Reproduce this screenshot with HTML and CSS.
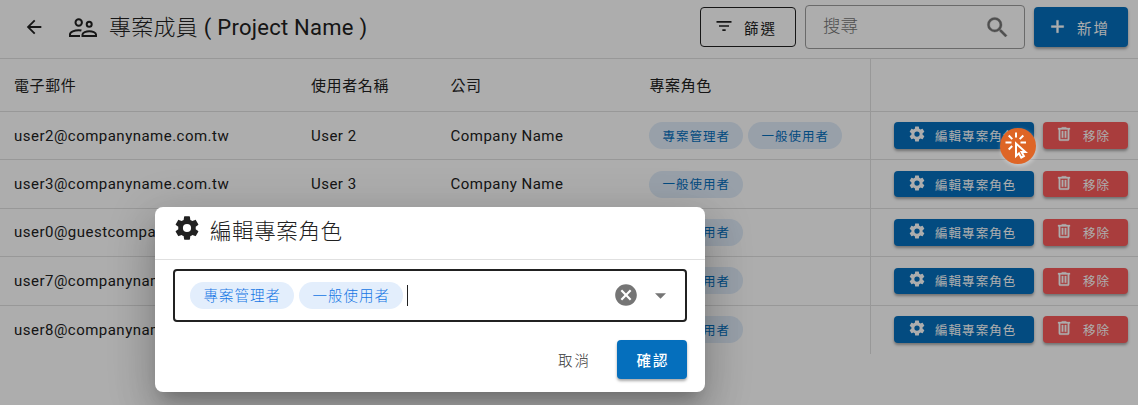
FILE: index.html
```html
<!DOCTYPE html>
<html lang="zh-Hant">
<head>
<meta charset="utf-8">
<title>專案成員</title>
<link rel="stylesheet" href="styles.css">
</head>
<body>
<svg width="0" height="0" class="defs">
  <symbol id="cog" viewBox="0 0 24 24"><path d="M12 15.5A3.5 3.5 0 0 1 8.5 12 3.5 3.5 0 0 1 12 8.500a3.500 3.500 0 0 1 3.500 3.500 3.500 3.500 0 0 1-3.500 3.500m7.430-2.530c.04-.32.07-.64.07-.97s-.03-.66-.07-1l2.110-1.630c.19-.15.24-.42.12-.64l-2-3.460c-.12-.22-.39-.31-.61-.22l-2.490 1c-.52-.39-1.060-.73-1.690-.98l-.37-2.650A.506.506 0 0 0 14 2h-4c-.25 0-.46.18-.5.42l-.37 2.650c-.63.25-1.170.59-1.690.98l-2.490-1c-.22-.09-.49 0-.61.22l-2 3.460c-.13.22-.07.49.12.64L4.570 11c-.04.34-.07.67-.07 1s.03.65.07.97l-2.110 1.660c-.19.15-.25.42-.12.64l2 3.460c.12.22.39.3.61.22l2.490-1.010c.52.4 1.060.74 1.690.99l.37 2.650c.04.24.25.42.5.42h4c.25 0 .46-.18.5-.42l.37-2.650c.63-.26 1.170-.59 1.690-.99l2.490 1.010c.22.08.49 0 .61-.22l2-3.460c.12-.22.07-.49-.12-.64z"/></symbol>
  <symbol id="trash" viewBox="0 0 24 24"><path d="M9 3v1H4v2h1v13a2 2 0 0 0 2 2h10a2 2 0 0 0 2-2V6h1V4h-5V3zM7 6h10v13H7zm2 2v9h2V8zm4 0v9h2V8z"/></symbol>
</svg>
<div class="page">
  <header class="topbar">
    <svg class="back" viewBox="0 0 24 24"><path d="M20 11v2H8l5.500 5.500-1.420 1.420L4.160 12l7.920-7.920L13.500 5.500 8 11z"/></svg>
    <svg class="people" viewBox="0 0 28 20"><circle cx="9.700" cy="4.500" r="3.200"/><circle cx="20.200" cy="6.300" r="2.500"/><path d="M11 17.900H1v-1.700c0-2.400 4.600-4 8.700-4 1 0 2 .1 2.700.3M13.500 17.900H27v-1.500c0-1.900-3.500-3.100-6.700-3.100s-6.800 1.200-6.800 3.100z"/></svg>
    <h1 class="title"><span class="light">專案成員</span> ( Project Name )</h1>
    <button class="btn filter"><svg viewBox="0 0 24 24"><path d="M6 13h12v-2H6M3 6v2h18V6M10 18h4v-2h-4z"/></svg><span>篩選</span></button>
    <div class="search"><span>搜尋</span><svg viewBox="0 0 24 24"><path d="M9.500 3A6.500 6.500 0 0 1 16 9.500c0 1.610-.59 3.090-1.560 4.230l.27.27h.79l5 5-1.500 1.500-5-5v-.79l-.27-.27A6.516 6.516 0 0 1 9.500 16 6.500 6.500 0 0 1 3 9.500 6.500 6.500 0 0 1 9.500 3m0 2C7 5 5 7 5 9.500S7 14 9.500 14 14 12 14 9.500 12 5 9.500 5"/></svg></div>
    <button class="btn add"><svg viewBox="0 0 24 24"><path d="M19 13h-6v6h-2v-6H5v-2h6V5h2v6h6z"/></svg><span>新增</span></button>
  </header>
  <main class="table">
    <div class="row head"><div class="cell">電子郵件</div><div class="cell">使用者名稱</div><div class="cell">公司</div><div class="cell">專案角色</div><div class="actions"></div></div>
    <div class="row"><div class="cell">user2@companyname.com.tw</div><div class="cell">User 2</div><div class="cell">Company Name</div><div class="cell chips"><span class="chip">專案管理者</span><span class="chip">一般使用者</span></div><div class="actions"><button class="btn edit"><svg><use href="#cog"/></svg><span>編輯專案角色</span></button><button class="btn remove"><svg><use href="#trash"/></svg><span>移除</span></button></div></div>
    <div class="row"><div class="cell">user3@companyname.com.tw</div><div class="cell">User 3</div><div class="cell">Company Name</div><div class="cell chips"><span class="chip">一般使用者</span></div><div class="actions"><button class="btn edit"><svg><use href="#cog"/></svg><span>編輯專案角色</span></button><button class="btn remove"><svg><use href="#trash"/></svg><span>移除</span></button></div></div>
    <div class="row"><div class="cell">user0@guestcompany</div><div class="cell"></div><div class="cell"></div><div class="cell chips"><span class="chip">一般使用者</span></div><div class="actions"><button class="btn edit"><svg><use href="#cog"/></svg><span>編輯專案角色</span></button><button class="btn remove"><svg><use href="#trash"/></svg><span>移除</span></button></div></div>
    <div class="row"><div class="cell">user7@companyname</div><div class="cell"></div><div class="cell"></div><div class="cell chips"><span class="chip">一般使用者</span></div><div class="actions"><button class="btn edit"><svg><use href="#cog"/></svg><span>編輯專案角色</span></button><button class="btn remove"><svg><use href="#trash"/></svg><span>移除</span></button></div></div>
    <div class="row"><div class="cell">user8@companyname</div><div class="cell"></div><div class="cell"></div><div class="cell chips"><span class="chip">一般使用者</span></div><div class="actions"><button class="btn edit"><svg><use href="#cog"/></svg><span>編輯專案角色</span></button><button class="btn remove"><svg><use href="#trash"/></svg><span>移除</span></button></div></div>
  </main>
</div>
<div class="scrim"></div>
<section class="dialog">
  <div class="dialog-head"><svg><use href="#cog"/></svg><h2>編輯專案角色</h2></div>
  <div class="field"><span class="chip big">專案管理者</span><span class="chip big">一般使用者</span><i class="caret"></i>
    <svg class="clear" viewBox="0 0 24 24"><path d="M12 2C6.470 2 2 6.470 2 12s4.470 10 10 10 10-4.470 10-10S17.530 2 12 2m5 13.590L15.590 17 12 13.410 8.410 17 7 15.590 10.590 12 7 8.410 8.410 7 12 10.590 15.590 7 17 8.410 13.410 12z"/></svg>
    <svg class="arrow" viewBox="0 0 10 5"><path d="M0 0h10L5 5z"/></svg>
  </div>
  <div class="dialog-foot"><button class="btn cancel">取消</button><button class="btn ok">確認</button></div>
</section>
<div class="pointer"><svg viewBox="0 0 36 36"><path d="M16 4.500v5M8.700 7.500l3.600 3.600M5.500 14.500h6M8.700 21.500l3.500-3.500M23.300 7.500l-3.600 3.600M20.500 14.500h5.500"/><path class="hand" d="M16 15.500v12.500l3-2.700 2.300 4.300 2.600-1.400-2.300-4.100h3.800z"/></svg></div>
</body>
</html>
```
FILE: styles.css
```css
* { box-sizing: border-box; }
body { margin: 0; width: 1138px; height: 405px; overflow: hidden; position: relative; background: #fff; color: #212121; font-family: Roboto, "Noto Sans CJK TC", sans-serif; }
svg { fill: currentColor; flex: none; }
.defs { position: absolute; }
.topbar { height: 59px; border-bottom: 1px solid #e0e0e0; display: flex; align-items: flex-start; padding: 0 10px 0 23px; }
.back { width: 22px; height: 22px; margin-top: 16px; }
.people { width: 28px; height: 20px; margin: 18px 0 0 24px; fill: none; stroke: currentColor; stroke-width: 2; }
.title { margin: 12px auto 0 12px; font-size: 22px; line-height: 32px; font-weight: 400; letter-spacing: .26px; white-space: pre; }
.light { font-weight: 300; }
.btn { display: flex; align-items: center; border: 0; border-radius: 4px; padding: 0; font: 500 14.500px Roboto, "Noto Sans CJK TC", sans-serif; letter-spacing: 2px; color: #fff; background: #056fbd; box-shadow: 0 2px 3px rgba(0,0,0,.35); white-space: nowrap; }
.filter { width: 96px; height: 40px; margin-top: 7px; padding-left: 13px; background: none; color: #212121; border: 1px solid #212121; box-shadow: none; font-weight: 400; }
.filter svg { width: 20px; height: 20px; margin-top: -2px; }
.filter span { margin: 0 0 0 10px; }
.search { width: 220px; height: 44px; margin: 5px 9px 0; border: 1px solid #9c9c9c; border-radius: 4px; display: flex; align-items: center; justify-content: space-between; padding: 0 13px 2px 17px; color: #757575; font-size: 17.500px; font-weight: 300; }
.search span { margin-top: -3px; }
.search svg { width: 27px; height: 27px; margin-top: 2px; stroke: currentColor; stroke-width: .3; }
.add { width: 94px; height: 40px; margin-top: 7px; padding-left: 13px; font-weight: 400; }
.add svg { width: 21px; height: 21px; margin-top: -2px; stroke: currentColor; stroke-width: .6; }
.add span { margin: 0 0 0 9px; }
.row { display: grid; grid-template-columns: 297px 139.500px 199px 234.500px 268px; height: 48.400px; }
.row > * { border-bottom: 1px solid #e0e0e0; }
.row:last-child > * { border-bottom: 0; }
.head { height: 53px; }
.cell { padding-left: 14px; display: flex; align-items: center; font-size: 15px; letter-spacing: .48px; }
.head .cell { letter-spacing: .6px; padding-bottom: 2px; }
.chips { gap: 5.500px; padding-left: 13.500px; }
.chip { height: 27px; border-radius: 14px; background: #e0ecfa; color: #056fbd; padding: 0 0 1px 13.500px; display: flex; align-items: center; font-size: 12.500px; letter-spacing: 1px; width: 93.500px; white-space: nowrap; }
.actions { border-left: 1px solid #e0e0e0; display: flex; align-items: center; gap: 9px; padding-left: 22.500px; }
.actions .btn { height: 26.700px; font-size: 12.500px; letter-spacing: 1.050px; font-weight: 400; }
.edit { width: 140px; padding-left: 14px; }
.edit svg { width: 18px; height: 18px; margin-top: -3px; }
.edit span { margin: 0 0 0 9.500px; }
.actions .remove { width: 85px; padding-left: 12px; background: #f95b5b; }
.remove svg { width: 18px; height: 18px; margin-top: -3px; stroke: currentColor; stroke-width: .4; }
.remove span { margin: 0 0 0 10.500px; }
.scrim { position: absolute; inset: 0; background: rgba(0,0,0,.32); }
.dialog { position: absolute; left: 155px; top: 207px; width: 550px; height: 185px; border-radius: 8px; background: #fff; box-shadow: 0 11px 15px -7px rgba(0,0,0,.2), 0 24px 38px 3px rgba(0,0,0,.14), 0 9px 46px 8px rgba(0,0,0,.12); }
.dialog-head { height: 53px; border-bottom: 1px solid #e0e0e0; display: flex; align-items: flex-start; padding-left: 18px; }
.dialog-head svg { width: 28px; height: 28px; margin-top: 7px; }
.dialog-head h2 { margin: 9px 0 0 9px; font-size: 21.500px; font-weight: 300; line-height: 32px; letter-spacing: .6px; }
.field { margin: 9px 18px 0; height: 53px; border: 2px solid #212121; border-radius: 4px; display: flex; align-items: center; padding: 0 19px 0 15px; }
.big { width: 104px; margin-right: 5px; padding: 0 0 2px 13.500px; color: #1476e4; background: #e3eefc; font-size: 14.500px; font-weight: 300; letter-spacing: 1px; }
.caret { width: 1px; height: 21px; background: #212121; margin: 0 auto 0 -1px; }
.clear { width: 26px; height: 26px; margin-top: -1px; color: #757575; }
.arrow { width: 11px; height: 6px; margin-left: 16px; color: #757575; }
.dialog-foot { display: flex; justify-content: flex-end; padding: 18px 18px 0 0; gap: 26px; }
.cancel { background: none; box-shadow: none; color: #333; font-weight: 300; }
.ok { width: 70px; height: 39px; justify-content: center; padding-left: 2px; }
.pointer { position: absolute; left: 1000px; top: 128px; width: 36px; height: 36px; border-radius: 50%; background: #de6526; box-shadow: 1px 2px 4px rgba(255,255,255,.4); }
.pointer svg { display: block; fill: none; stroke: #fff; stroke-width: 2; }
```
